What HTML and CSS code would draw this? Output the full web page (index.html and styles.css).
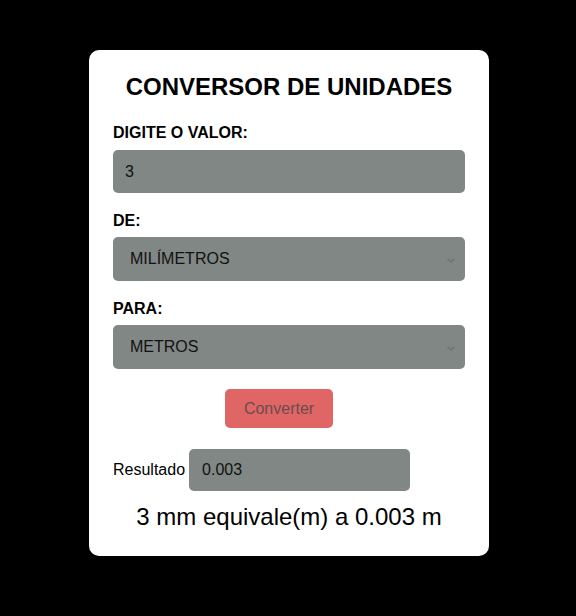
FILE: index.html
```html
<!DOCTYPE html>
<html lang="pt">
<head>
<meta charset="utf-8">
<title>Conversor de Unidades</title>
<link rel="stylesheet" href="styles.css">
</head>
<body>
<main class="card">
  <h1 class="title">CONVERSOR DE UNIDADES</h1>
  <div class="field">
    <label class="label">DIGITE O VALOR:</label>
    <div class="box input">3</div>
  </div>
  <div class="field">
    <label class="label">DE:</label>
    <div class="box select"><span class="opt">MILÍMETROS</span>
      <svg class="chev" width="8" height="5" viewBox="0 0 8 5"><path d="M0.5 0.8 L4 4 L7.5 0.8" fill="none" stroke="#6c6f6e" stroke-width="1.2"/></svg>
    </div>
  </div>
  <div class="field">
    <label class="label">PARA:</label>
    <div class="box select"><span class="opt">METROS</span>
      <svg class="chev" width="8" height="5" viewBox="0 0 8 5"><path d="M0.5 0.8 L4 4 L7.5 0.8" fill="none" stroke="#6c6f6e" stroke-width="1.2"/></svg>
    </div>
  </div>
  <div class="actions">
    <button class="btn">Converter</button>
  </div>
  <div class="result-row">
    <span class="result-label">Resultado</span>
    <div class="box result">0.003</div>
  </div>
  <p class="summary">3 mm equivale(m) a 0.003 m</p>
</main>
</body>
</html>
```

FILE: styles.css
```css
html, body {
  margin: 0;
  padding: 0;
  background: #000;
}
body {
  font-family: "Liberation Sans", Arial, sans-serif;
  color: #000;
  display: flex;
  justify-content: center;
  padding: 50px 0 0 2px;
}
.card {
  width: 352px;
  background: #fff;
  border-radius: 10px;
  padding: 23px 24px 25px;
  display: flex;
  flex-direction: column;
}
.title {
  margin: 0 0 23px;
  font-size: 24px;
  font-weight: bold;
  text-align: center;
  line-height: 28px;
}
.field {
  display: flex;
  flex-direction: column;
  margin-bottom: 19px;
}
.label {
  font-size: 16px;
  font-weight: bold;
  line-height: 18px;
  margin-bottom: 8px;
}
.box {
  background: #818784;
  border-radius: 5px;
  font-size: 16px;
  color: #111;
  display: flex;
  align-items: center;
  box-sizing: border-box;
}
.input {
  height: 43px;
  padding-left: 12px;
}
.select {
  height: 44px;
  padding: 0 10px 0 17px;
  justify-content: space-between;
  margin-top: -1px;
}
.chev {
  display: block;
  margin-top: 2px;
}
.actions {
  display: flex;
  justify-content: center;
  margin-top: 1px;
  padding-right: 20px;
}
.btn {
  width: 108px;
  height: 39px;
  background: #e06666;
  border: none;
  border-radius: 5px;
  font-family: "Liberation Sans", Arial, sans-serif;
  font-size: 16px;
  color: #6a4c4c;
  padding: 0;
}
.result-row {
  display: flex;
  align-items: center;
  margin-top: 21px;
}
.result-label {
  font-size: 16px;
  margin-right: 4px;
}
.result {
  width: 221px;
  height: 42px;
  padding-left: 13px;
}
.summary {
  margin: 12px 0 0;
  font-size: 24px;
  line-height: 28px;
  text-align: center;
}
```
